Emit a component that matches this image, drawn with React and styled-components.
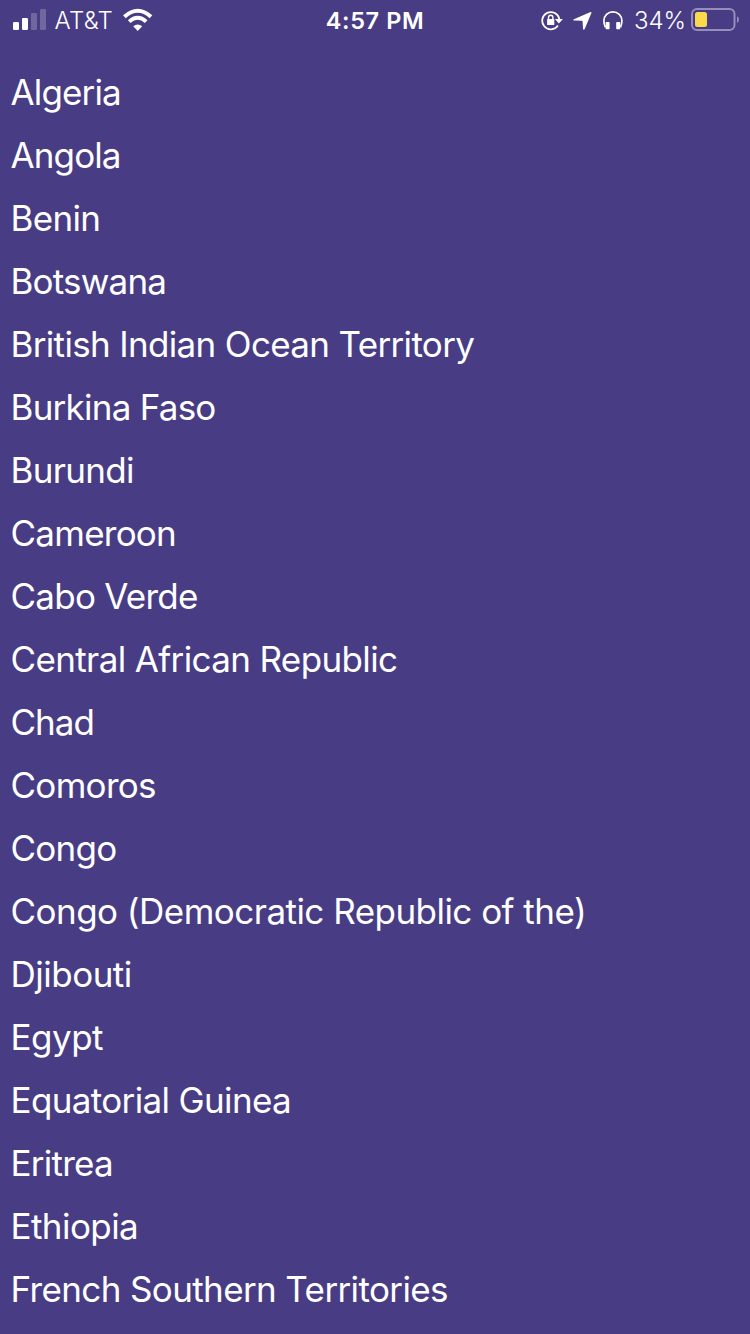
import React from "react";
import styled, { createGlobalStyle } from "styled-components";

const Global = createGlobalStyle`
  * { box-sizing: border-box; }
  body { margin: 0; background: #483d85; }
`;
const Screen = styled.main`
  height: 1334px;
  overflow: hidden;
  background: #483d85;
  color: #fff;
  font-family: Inter, "Liberation Sans", sans-serif;
`;
const StatusBar = styled.header`
  height: 40px;
  display: grid;
  grid-template-columns: 1fr auto 1fr;
  align-items: center;
  padding: 0 11px 0 13px;
`;
const Group = styled.div`
  display: flex;
  align-items: center;
  height: 40px;
  justify-content: ${(p) => (p.$end ? "flex-end" : "flex-start")};
`;
const Time = styled.div`
  height: 40px;
  margin-right: 2px;
  font-size: 23.5px;
  font-weight: 570;
  line-height: 42px;
  letter-spacing: 0.6px;
`;
const Label = styled.span`
  height: 40px;
  font-size: 24px;
  font-weight: 350;
  line-height: 42px;
  letter-spacing: ${(p) => p.$tracking || 0}px;
`;
const Glyph = styled.svg`
  display: block;
  flex: none;
  margin-left: ${(p) => p.$before || 0}px;
  margin-right: ${(p) => p.$after || 0}px;
`;
const List = styled.ul`
  list-style: none;
  margin: 0;
  padding: 21px 10.5px 0;
`;
const Country = styled.li`
  height: 63px;
  font-size: 35px;
  line-height: 63px;
  letter-spacing: ${(p) => p.$tracking}px;
  white-space: nowrap;
`;

const countries = [
  ["Algeria", -0.85],
  ["Angola", -0.88],
  ["Benin", -0.68],
  ["Botswana", -0.8],
  ["British Indian Ocean Territory", -0.66],
  ["Burkina Faso", -0.75],
  ["Burundi", -0.68],
  ["Cameroon", -0.75],
  ["Cabo Verde", -0.75],
  ["Central African Republic", -0.63],
  ["Chad", -0.95],
  ["Comoros", -0.7],
  ["Congo", -0.75],
  ["Congo (Democratic Republic of the)", -0.53],
  ["Djibouti", -0.5],
  ["Egypt", -0.5],
  ["Equatorial Guinea", -0.64],
  ["Eritrea", -0.74],
  ["Ethiopia", -0.57],
  ["French Southern Territories", -0.62],
];

const Signal = () => (
  <Glyph width="33" height="40" $after={8.5} fill="#fff">
    <rect x="0" y="22" width="6" height="8" rx="1.3" />
    <rect x="9" y="18" width="6" height="12" rx="1.3" />
    <rect x="18" y="13" width="6" height="17" rx="1.3" opacity="0.22" />
    <rect x="27" y="9" width="6" height="21" rx="1.3" opacity="0.22" />
  </Glyph>
);
const Wifi = () => (
  <Glyph width="30" height="40" $before={9.5} fill="none" stroke="#fff">
    <path d="M1.4 16.7Q14.7 4.8 28 16.7" strokeWidth="4" />
    <path d="M6.2 21.6Q14.7 13.8 23.2 21.6" strokeWidth="3.8" />
    <path d="M14.7 31L10.2 26.3Q14.7 22.6 19.2 26.3Z" fill="#fff" stroke="none" />
  </Glyph>
);
const RotationLock = () => (
  <Glyph width="22" height="40" $after={10} fill="none" stroke="#fff">
    <path d="M16.9 25.6A8.6 8.6 0 1 1 18.3 19.2" strokeWidth="1.8" />
    <path d="M13.9 19H21.9L17.9 23.4Z" fill="#fff" stroke="none" />
    <rect x="6.1" y="19" width="7.2" height="6" rx="0.6" fill="#fff" stroke="none" />
    <path d="M7.5 19.4v-1.9a2.2 2.2 0 0 1 4.4 0V19.4" strokeWidth="1.4" />
  </Glyph>
);
const Location = () => (
  <Glyph width="19" height="40" $after={11} fill="#fff">
    <path d="M0.9 19.2L17 12.2Q18.9 11.5 18.3 13.3L11.7 29Q10.6 30.7 10 28.8L9.6 21.4Q9.5 20.8 8.9 20.8L1.2 20.6Q-.4 20 .9 19.2Z" />
  </Glyph>
);
const Headphones = () => (
  <Glyph width="20" height="40" $after={11} fill="#fff">
    <path d="M2.4 27.4Q.9 24.5.9 20.8A9 9 0 0 1 18.9 20.8Q18.9 24.5 17.4 27.4" fill="none" stroke="#fff" strokeWidth="1.7" />
    <rect x="2.6" y="22" width="4" height="7.2" rx="0.8" />
    <rect x="13.2" y="22" width="4" height="7.2" rx="0.8" />
  </Glyph>
);
const Battery = () => (
  <Glyph width="48" height="40" $before={5}>
    <rect x="1" y="9" width="42.5" height="21" rx="5" fill="none" stroke="#fff" strokeOpacity="0.42" strokeWidth="2" />
    <path d="M46 16.2Q48 17 48 19.5T46 22.8Z" fill="#fff" fillOpacity="0.42" />
    <rect x="4" y="12" width="12" height="15" rx="2.5" fill="#fcd94a" />
  </Glyph>
);

export default function App() {
  return (
    <Screen>
      <Global />
      <StatusBar>
        <Group>
          <Signal />
          <Label $tracking={0.3}>AT&amp;T</Label>
          <Wifi />
        </Group>
        <Time>4:57 PM</Time>
        <Group $end>
          <RotationLock />
          <Location />
          <Headphones />
          <Label>34%</Label>
          <Battery />
        </Group>
      </StatusBar>
      <List>
        {countries.map(([name, tracking]) => (
          <Country key={name} $tracking={tracking}>{name}</Country>
        ))}
      </List>
    </Screen>
  );
}
